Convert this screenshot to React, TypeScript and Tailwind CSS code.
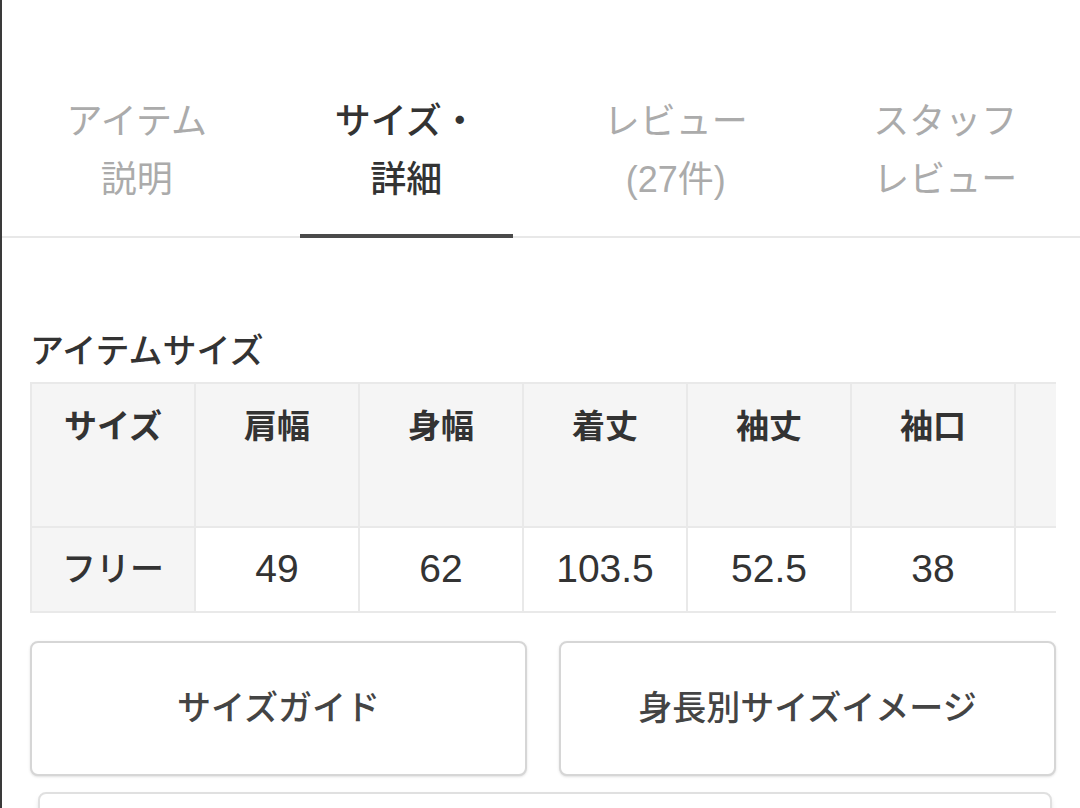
import React from "react";

const tabs = [
  { top: "アイテム", bottom: "説明", active: false },
  { top: "サイズ・", bottom: "詳細", active: true },
  { top: "レビュー", bottom: "(27件)", active: false },
  { top: "スタッフ", bottom: "レビュー", active: false },
];

const headers = ["サイズ", "肩幅", "身幅", "着丈", "袖丈", "袖口", ""];
const values = ["フリー", "49", "62", "103.5", "52.5", "38", ""];

export default function App() {
  return (
    <div
      className="relative h-[808px] w-[1080px] overflow-hidden border-l-2 border-[#3a3a3a] bg-white text-[#333]"
      style={{ fontFamily: '"Liberation Sans", "Noto Sans CJK JP", sans-serif' }}
    >
      <nav className="grid grid-cols-4 border-b-2 border-[#e8e8e8]">
        {tabs.map((tab) => (
          <div key={tab.top} className="flex flex-col items-center pt-[93px]">
            <div
              className={
                tab.active
                  ? "text-center text-[36px] font-medium leading-[58px] text-[#333]"
                  : "text-center text-[36px] leading-[58px] text-[#ababab]"
              }
            >
              <div>{tab.top}</div>
              <div>{tab.bottom}</div>
            </div>
            <div
              className={
                tab.active
                  ? "relative -mb-[2px] mt-[25px] h-[4px] w-[213px] bg-[#4a4a4a]"
                  : "-mb-[2px] mt-[25px] h-[4px] w-[213px]"
              }
            />
          </div>
        ))}
      </nav>

      <section className="pl-[28px] pr-[24px]">
        <h2 className="mt-[93px] text-[34px] font-medium leading-[40px] text-[#333]">
          アイテムサイズ
        </h2>

        <div className="mt-[11px] w-[1026px] overflow-hidden">
          <table className="w-[1148px] table-fixed border-collapse">
            <tbody>
              <tr className="h-[144px] bg-[#f5f5f5]">
                {headers.map((h, i) => (
                  <th
                    key={i}
                    className="w-[164px] border-2 border-[#e9e9e9] pt-[23px] align-top text-[33px] font-bold leading-[40px] text-[#333]"
                  >
                    {h}
                  </th>
                ))}
              </tr>
              <tr className="h-[85px]">
                {values.map((v, i) => (
                  <td
                    key={i}
                    className={
                      i === 0
                        ? "border-2 border-[#e9e9e9] bg-[#f5f5f5] text-center align-middle text-[34px] font-medium text-[#333]"
                        : "border-2 border-[#e9e9e9] bg-white text-center align-middle text-[39px] text-[#333]"
                    }
                  >
                    {v}
                  </td>
                ))}
              </tr>
            </tbody>
          </table>
        </div>

        <div className="mt-[28px] flex gap-8">
          <button
            type="button"
            className="flex h-[135px] flex-1 items-center justify-center rounded-lg border-2 border-[#d6d6d6] bg-white text-[34px] font-medium text-[#444] shadow-sm"
          >
            サイズガイド
          </button>
          <button
            type="button"
            className="flex h-[135px] flex-1 items-center justify-center rounded-lg border-2 border-[#d6d6d6] bg-white text-[34px] font-medium text-[#444] shadow-sm"
          >
            身長別サイズイメージ
          </button>
        </div>

        <div className="ml-[8px] mr-[4px] mt-[16px] h-[60px] rounded-t-lg border-2 border-[#e0e0e0] bg-white shadow-md" />
      </section>
    </div>
  );
}
